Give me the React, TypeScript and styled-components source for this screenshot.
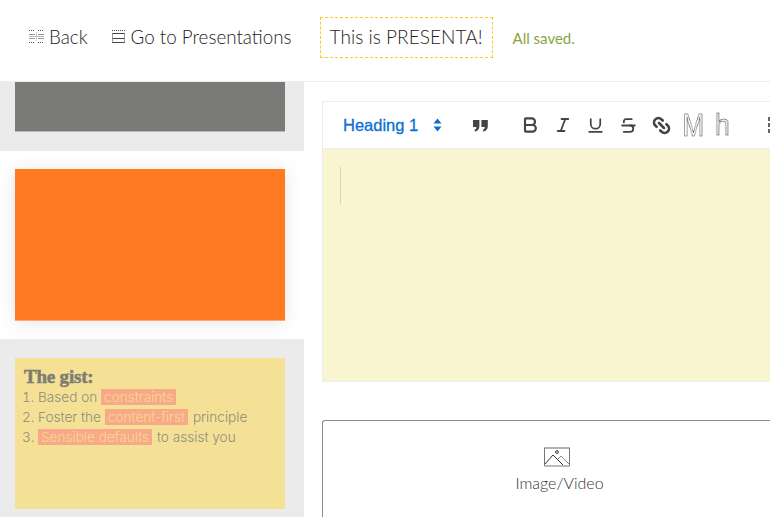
import React from "react";
import styled, { createGlobalStyle } from "styled-components";
import { Bold, Italic, Underline, Strikethrough, Link2 } from "lucide-react";

const GlobalStyle = createGlobalStyle`
  html, body {
    margin: 0;
    padding: 0;
    height: 100%;
    overflow: hidden;
    background: #fff;
    font-family: "Lato", "Liberation Sans", sans-serif;
  }
`;

const Page = styled.div`
  width: 770px;
  height: 517px;
  display: flex;
  flex-direction: column;
  overflow: hidden;
`;

const Header = styled.header`
  height: 75px;
  flex: none;
  display: flex;
  align-items: center;
  padding: 0 0 6px 29px;
  border-bottom: 1px solid #ececec;
`;

const NavLink = styled.a<{ $gap: number }>`
  display: flex;
  align-items: center;
  gap: 5px;
  padding-bottom: 2px;
  font-size: 18.8px;
  font-weight: 300;
  color: #222;
  margin-right: ${(p) => p.$gap}px;
  white-space: nowrap;
`;

const Title = styled.div`
  width: 173px;
  height: 41px;
  box-sizing: border-box;
  padding-bottom: 2px;
  border: 1px dashed #ffc928;
  display: flex;
  align-items: center;
  justify-content: center;
  font-size: 19.1px;
  font-weight: 300;
  color: #222;
  white-space: nowrap;
`;

const Saved = styled.span`
  margin-left: 20px;
  font-size: 15px;
  color: #86a543;
`;

const Body = styled.div`
  flex: 1;
  display: flex;
  min-height: 0;
`;

const Sidebar = styled.aside`
  width: 304px;
  flex: none;
  display: flex;
  flex-direction: column;
`;

const Slide = styled.div<{ $active?: boolean; $top: number; $bottom: number }>`
  padding: ${(p) => p.$top}px 19px ${(p) => p.$bottom}px 15px;
  background: ${(p) => (p.$active ? "#fff" : "#ebebeb")};
`;

const Card = styled.div<{ $bg: string; $h: number; $edge?: string; $shadow?: boolean }>`
  width: 270px;
  height: ${(p) => p.$h}px;
  box-sizing: border-box;
  background: ${(p) => p.$bg};
  border-bottom: ${(p) => (p.$edge ? `1px solid ${p.$edge}` : "none")};
  box-shadow: ${(p) => (p.$shadow ? "0 2px 18px rgba(0, 0, 0, 0.1)" : "none")};
`;

const GistCard = styled(Card)`
  padding: 10px 9px;
  color: #8f8d7c;
  font-family: "Inter", "Liberation Sans", sans-serif;
  font-size: 13.6px;
  font-weight: 300;
  line-height: 20px;
`;

const GistTitle = styled.h3`
  margin: 0;
  font-family: "Liberation Serif", serif;
  font-size: 19px;
  font-weight: 700;
  line-height: 17px;
  color: #7d7c73;
  letter-spacing: -0.2px;
  -webkit-text-stroke: 0.5px #7d7c73;
`;

const GistList = styled.ol`
  margin: 2px 0 0;
  padding: 0 0 0 14px;
`;

const Mark = styled.span`
  background: #f8a98a;
  color: #f8d98c;
  padding: 0 3px;
  margin-right: 1px;
`;

const Main = styled.main`
  flex: 1;
  min-width: 0;
  padding: 19px 0 0 18px;
  display: flex;
  flex-direction: column;
  overflow: hidden;
`;

const EditorBox = styled.section`
  width: 474px;
  height: 281px;
  flex: none;
  box-sizing: border-box;
  border: 1px solid #ececec;
  border-right: none;
  display: flex;
  flex-direction: column;
`;

const Toolbar = styled.div`
  height: 47px;
  flex: none;
  display: flex;
  align-items: center;
  border-bottom: 1px solid #ececec;
  box-sizing: border-box;
  padding-left: 20px;
  color: #444;
`;

const HeadingSelect = styled.div`
  display: flex;
  align-items: center;
  gap: 15px;
  width: 128px;
  flex: none;
  font-family: "Liberation Sans", sans-serif;
  font-size: 16.5px;
  color: #0a6fd0;
  -webkit-text-stroke: 0.3px #0a6fd0;
  white-space: nowrap;
`;

const Tool = styled.span<{ $w: number; $after?: number }>`
  width: ${(p) => p.$w}px;
  margin-right: ${(p) => p.$after ?? 0}px;
  flex: none;
  display: flex;
  align-items: center;
  justify-content: center;
`;

const OutlineGlyph = styled.span<{ $size: number; $squeeze: number }>`
  font-family: "Liberation Sans", sans-serif;
  font-size: ${(p) => p.$size}px;
  line-height: 1;
  color: #fff;
  -webkit-text-stroke: 0.6px #333;
  transform: scaleX(${(p) => p.$squeeze});
  will-change: transform;
`;

const EditArea = styled.div`
  flex: 1;
  background: #f8f5d0;
  padding: 18px 17px;
`;

const Caret = styled.div`
  width: 1px;
  height: 37px;
  background: #dcd7a8;
`;

const UploadBox = styled.section`
  margin-top: 38px;
  width: 474px;
  height: 120px;
  flex: none;
  box-sizing: border-box;
  border: 1px solid #8a8a8a;
  border-right: none;
  border-radius: 3px 0 0 0;
  padding-top: 26px;
  display: flex;
  flex-direction: column;
  align-items: center;
  font-size: 16px;
  font-weight: 300;
  color: #333;
`;

const UploadIcon = styled.span`
  display: flex;
  margin-right: 6px;
`;

const UploadLabel = styled.span`
  margin-top: 6px;
`;

const BackIcon = () => (
  <svg width="15" height="15" viewBox="0 0 15 15" fill="none" stroke="#555" strokeWidth="1">
    <path d="M0 1.5h6M9 1.5h6M0 13.5h6M9 13.5h6" strokeDasharray="1 1" />
    <path d="M0 7.5h15" stroke="#bbb" />
    <path d="M7.5 3v9" stroke="#ccc" />
    <path d="M0 5.5h6M9 5.5h6M0 9.5h6M9 9.5h6" stroke="#999" />
  </svg>
);

const ListIcon = () => (
  <svg width="15" height="15" viewBox="0 0 15 15" fill="none" stroke="#444" strokeWidth="1">
    <path d="M1 1.5h13" strokeDasharray="1 1" />
    <path d="M1 4.5h13M1 9.5h13M1 13.5h13" />
    <path d="M1.5 4.5v5M13.5 4.5v5M1.5 9.5v4M13.5 9.5v4" stroke="#999" />
  </svg>
);

const QuoteIcon = () => (
  <svg width="15" height="13" viewBox="0 0 15 13" fill="#444">
    <path d="M0 1h6.4v6.2C6.4 10 4.6 12 2 12.6l-.7-1.5C2.7 10.5 3.4 9.6 3.4 8H0zM8.4 1h6.4v6.2c0 2.8-1.8 4.8-4.4 5.4l-.7-1.5c1.4-.6 2.1-1.5 2.1-3.1H8.4z" />
  </svg>
);

const SortIcon = () => (
  <svg width="9" height="14" viewBox="0 0 9 14" fill="#0a6fd0">
    <path d="M4.5 0.5L8.5 5.5H0.5zM4.5 13.5L0.5 8.5H8.5z" />
  </svg>
);

const ClippedListIcon = () => (
  <svg width="8" height="16" viewBox="0 0 8 16" fill="#666">
    <path d="M1 0h4v4H1zM1 6h4v4H1zM1 12h4v4H1z" />
  </svg>
);

const ImageIcon = () => (
  <svg width="26" height="20" viewBox="0 0 26 20" fill="none" stroke="#333" strokeWidth="1">
    <path d="M0.5 1h25" strokeDasharray="1 1" strokeWidth="1.4" />
    <path d="M0.5 1v18h25V1" stroke="#777" />
    <path d="M1 17l8-9 10 10" />
    <path d="M14 12l3-3 8 8" stroke="#888" />
    <circle cx="13" cy="5" r="1.4" />
  </svg>
);

export default function App() {
  return (
    <Page>
      <GlobalStyle />
      <Header>
        <NavLink $gap={23}>
          <BackIcon />
          Back
        </NavLink>
        <NavLink $gap={28}>
          <ListIcon />
          Go to Presentations
        </NavLink>
        <Title>This is PRESENTA!</Title>
        <Saved>All saved.</Saved>
      </Header>
      <Body>
        <Sidebar>
          <Slide $top={0} $bottom={19}>
            <Card $bg="#7a7a78" $h={50} $edge="#b9b9b8" />
          </Slide>
          <Slide $active $top={18} $bottom={18}>
            <Card $bg="#ff7a20" $h={152} $edge="#fda878" $shadow />
          </Slide>
          <Slide $top={19} $bottom={18}>
            <GistCard $bg="#f4e196" $h={151}>
              <GistTitle>The gist:</GistTitle>
              <GistList>
                <li>
                  Based on <Mark>constraints</Mark>
                </li>
                <li>
                  Foster the <Mark>content-first</Mark> principle
                </li>
                <li>
                  <Mark>Sensible defaults</Mark> to assist you
                </li>
              </GistList>
            </GistCard>
          </Slide>
        </Sidebar>
        <Main>
          <EditorBox>
            <Toolbar>
              <HeadingSelect>
                Heading 1
                <SortIcon />
              </HeadingSelect>
              <Tool $w={18} $after={23}>
                <QuoteIcon />
              </Tool>
              <Tool $w={36}>
                <Bold size={20} strokeWidth={2.6} />
              </Tool>
              <Tool $w={30}>
                <Italic size={18} strokeWidth={2.4} />
              </Tool>
              <Tool $w={34}>
                <Underline size={19} strokeWidth={2.2} />
              </Tool>
              <Tool $w={32}>
                <Strikethrough size={19} strokeWidth={2.3} />
              </Tool>
              <Tool $w={34}>
                <Link2 size={21} strokeWidth={3} style={{ transform: "rotate(45deg)" }} />
              </Tool>
              <Tool $w={30}>
                <OutlineGlyph $size={32} $squeeze={0.8}>M</OutlineGlyph>
              </Tool>
              <Tool $w={28} $after={31}>
                <OutlineGlyph $size={30} $squeeze={0.9}>h</OutlineGlyph>
              </Tool>
              <ClippedListIcon />
            </Toolbar>
            <EditArea>
              <Caret />
            </EditArea>
          </EditorBox>
          <UploadBox>
            <UploadIcon>
              <ImageIcon />
            </UploadIcon>
            <UploadLabel>Image/Video</UploadLabel>
          </UploadBox>
        </Main>
      </Body>
    </Page>
  );
}
